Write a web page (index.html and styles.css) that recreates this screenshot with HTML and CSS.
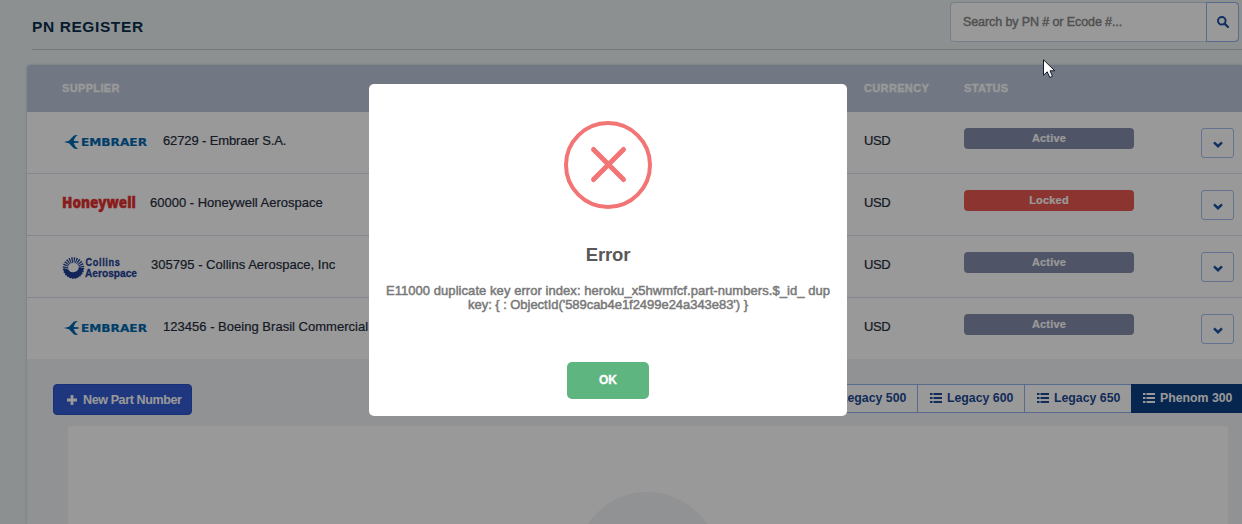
FILE: index.html
```html
<!DOCTYPE html>
<html lang="en">
<head>
<meta charset="utf-8">
<title>PN Register</title>
<link rel="stylesheet" href="styles.css">
</head>
<body>
<svg class="defs" width="0" height="0" aria-hidden="true">
  <symbol id="list" viewBox="0 0 12 10"><path d="M0 0h2.500v2H0zM3.500 0H12v2H3.500zM0 4h2.500v2H0zM3.500 4H12v2H3.500zM0 8h2.500v2H0zM3.500 8H12v2H3.500z" fill="currentColor"/></symbol>
  <symbol id="down" viewBox="0 0 10 7"><path d="M1 1.300 L5 5.200 L9 1.300" fill="none" stroke="currentColor" stroke-width="2.400"/></symbol>
</svg>

<div class="page">
  <header class="top">
    <h1 class="title">PN REGISTER</h1>
    <div class="search">
      <span class="field">Search by PN # or Ecode #...</span>
      <span class="go"><svg width="12" height="12" viewBox="0 0 12 12"><circle cx="4.800" cy="4.800" r="3.800" fill="none" stroke="#1c51a4" stroke-width="2"/><path d="M7.600 7.600l3.400 3.400" stroke="#1c51a4" stroke-width="2.200" stroke-linecap="round"/></svg></span>
    </div>
  </header>

  <main class="panel">
    <div class="row head"><span class="supplier">SUPPLIER</span><span class="currency">CURRENCY</span><span class="status">STATUS</span></div>
    <div class="row">
      <span class="supplier"><svg class="em" width="84" height="16"><path d="M0 8 L5 6.700 L10 1.400 Q11.500 .8 14 1 Q10.500 3 9.800 6.900 L14.500 7.200 V8.800 L9.800 9.100 Q10.500 13 14 15 Q11.500 15.200 10 14.600 L5 9.300 Z" fill="#0069b0"/><text class="logo-embraer" x="17" y="12" textLength="66" lengthAdjust="spacingAndGlyphs">EMBRAER</text></svg><span class="n1">62729 - Embraer S.A.</span></span>
      <span class="currency">USD</span><span class="status"><b class="badge">Active</b></span><span class="more"><svg width="10" height="7"><use href="#down"/></svg></span>
    </div>
    <div class="row">
      <span class="supplier"><svg class="hw" width="76" height="28"><text class="logo-honeywell" x="0" y="16.500" textLength="74" lengthAdjust="spacingAndGlyphs">Honeywell</text></svg><span class="n2">60000 - Honeywell Aerospace</span></span>
      <span class="currency">USD</span><span class="status"><b class="badge locked">Locked</b></span><span class="more"><svg width="10" height="7"><use href="#down"/></svg></span>
    </div>
    <div class="row">
      <span class="supplier"><svg class="co" width="77" height="28"><circle cx="11.500" cy="12" r="8" fill="none" stroke="#1f3f95" stroke-width="5.500" stroke-dasharray="1.150 .944"/><path d="M1.500 12 A10 10 0 0 0 21.500 12.500 L17 11 A6 6 0 0 1 6 13.500 Z" fill="#1f3f95"/><text class="logo-collins" transform="translate(23.500 9.700) scale(.8 1)" textLength="43" lengthAdjust="spacing">Collins</text><text class="logo-collins" transform="translate(23 20.500) scale(.8 1)" textLength="65" lengthAdjust="spacingAndGlyphs">Aerospace</text></svg><span class="n3">305795 - Collins Aerospace, Inc</span></span>
      <span class="currency">USD</span><span class="status"><b class="badge">Active</b></span><span class="more"><svg width="10" height="7"><use href="#down"/></svg></span>
    </div>
    <div class="row last">
      <span class="supplier"><svg class="em" width="84" height="16"><path d="M0 8 L5 6.700 L10 1.400 Q11.500 .8 14 1 Q10.500 3 9.800 6.900 L14.500 7.200 V8.800 L9.800 9.100 Q10.500 13 14 15 Q11.500 15.200 10 14.600 L5 9.300 Z" fill="#0069b0"/><text class="logo-embraer" x="17" y="12" textLength="66" lengthAdjust="spacingAndGlyphs">EMBRAER</text></svg><span class="n3">123456 - Boeing Brasil Commercial</span></span>
      <span class="currency">USD</span><span class="status"><b class="badge">Active</b></span><span class="more"><svg width="10" height="7"><use href="#down"/></svg></span>
    </div>

    <div class="tools">
      <span class="new"><svg width="10" height="10" viewBox="0 0 10 10"><path d="M5 0v10M0 5h10" stroke="#fff" stroke-width="2.800"/></svg>New Part Number</span>
      <div class="tabs">
        <span class="tab"><svg width="12" height="10"><use href="#list"/></svg>Legacy 500</span>
        <span class="tab"><svg width="12" height="10"><use href="#list"/></svg>Legacy 600</span>
        <span class="tab"><svg width="12" height="10"><use href="#list"/></svg>Legacy 650</span>
        <span class="tab on"><svg width="12" height="10"><use href="#list"/></svg>Phenom 300</span>
      </div>
    </div>
    <div class="card"><div class="disc"></div></div>
  </main>
</div>

<div class="overlay">
  <div class="modal">
    <svg class="cross" width="88" height="88"><circle cx="44" cy="44" r="42" fill="none" stroke="#f27474" stroke-width="4"/><path d="M29.500 28.500l30 30M59.500 28.500l-30 30" stroke="#f27474" stroke-width="5" stroke-linecap="round"/></svg>
    <h2 class="modal-title">Error</h2>
    <p class="message"><span class="m1">E11000 duplicate key error index: heroku_x5hwmfcf.part-numbers.$_id_ dup</span><br><span class="m2">key: { : ObjectId('589cab4e1f2499e24a343e83') }</span></p>
    <span class="ok">OK</span>
  </div>
</div>
<svg class="cursor" width="13" height="20" viewBox="0 0 13 20"><path d="M.5 .8V16.200L4.200 12.800L6.800 18.500L9.500 17.300L7 11.800H11.800Z" fill="#fff" stroke="#111827"/></svg>
</body>
</html>
```
FILE: styles.css
```css
* { box-sizing: border-box; }
body { margin: 0; width: 1242px; height: 524px; overflow: hidden; background: #e9f1f0; color: #252c3d; font: 13px "Liberation Sans", Arial, sans-serif; }
svg { display: block; flex: none; }
.defs { position: absolute; }
.page { width: 1242px; height: 524px; overflow: hidden; padding-left: 27px; }
.top { height: 50px; margin-left: 5px; border-bottom: 1px solid #c1c9d0; display: flex; justify-content: space-between; }
.title { margin: 17px 0 0; font-size: 15.5px; line-height: 20px; letter-spacing: .6px; font-weight: 700; color: #0a2e4e; }
.search { display: flex; width: 289px; height: 40px; margin: 2px 3px 0 0; background: #fff; border: 1px solid #c4d2e8; border-radius: 4px; }
.field { flex: 1; padding: 12px 0 0 12px; line-height: 15px; font-size: 12.5px; letter-spacing: -.1px; color: #858585; -webkit-text-stroke: .4px; }
.go { width: 33px; margin: -1px; border: 1px solid #91b3ed; border-radius: 0 4px 4px 0; display: flex; align-items: center; justify-content: center; }
.panel { margin-top: 15px; width: 1215px; height: 459px; background: #f1f3f6; border-radius: 4px 0 0 0; box-shadow: 0 0 3px #b9c5d1; overflow: hidden; }
.row { display: flex; height: 62px; background: #fff; border-bottom: 1px solid #dce0ec; padding-left: 35px; -webkit-text-stroke: .2px; }
.row.last { border-bottom: 0; height: 61px; }
.row.head { height: 47px; border: 0; background: #bec9da; color: #fff; font-size: 11px; font-weight: 700; line-height: 46px; -webkit-text-stroke: .3px; letter-spacing: .35px; }
.supplier { display: flex; width: 802px; white-space: nowrap; }
.currency { width: 100px; }
.status { width: 237px; }
.row:not(.head) .currency, .supplier > span { line-height: 17px; padding-top: 20px; }
.row:not(.head) .currency { letter-spacing: -.4px; }
.em { margin: 22px 15px 0 2px; }
.hw { margin: 17px 12px 0 0; }
.co { margin: 20px 12px 0 0; }
.n1 { letter-spacing: -.12px; }
.n2 { letter-spacing: 0; }
.n3 { letter-spacing: .02px; }
.badge { display: block; width: 170px; height: 21px; margin-top: 16px; border-radius: 4px; background: #848cac; color: #fff; font-size: 11px; line-height: 21px; text-align: center; letter-spacing: .2px; }
.locked { background: #e95850; }
.more { display: flex; align-items: center; justify-content: center; width: 33px; height: 30px; margin-top: 16px; border: 1px solid #a5c0ee; border-radius: 3px; color: #1c51a4; padding-top: 3px; }
.tools { display: flex; justify-content: space-between; padding: 25px 0 0 26px; height: 67px; }
.new { display: flex; align-items: center; gap: 6px; width: 139px; height: 31px; padding-left: 13px; border: 1px solid #2850c8; border-radius: 4px; background: #355dd4; color: #fff; font-size: 12.5px; font-weight: 700; letter-spacing: -.38px; white-space: nowrap; }
.tabs { display: flex; height: 30px; }
.tab { display: flex; align-items: center; width: 107px; gap: 5px; height: 29px; padding-left: 12px; border: 1px solid #91b3ed; border-right: 0; background: #fff; color: #1c4a94; font-weight: 700; font-size: 12.3px; padding-bottom: 1px; white-space: nowrap; }
.tab.on { width: 111px; padding-left: 11px; background: #0a3e84; color: #fff; border-color: #0a3e84; }
.card { width: 1160px; height: 120px; margin-left: 41px; background: #fff; border-radius: 4px; overflow: hidden; padding: 66px 0 0 508px; }
.disc { width: 143px; height: 143px; border-radius: 50%; background: #f1f3f6; }
.overlay { position: absolute; inset: 0; background: rgba(0,0,0,.4); }
.modal { position: absolute; left: 369px; top: 84px; width: 478px; height: 332px; border-radius: 5px; background: #fff; display: flex; flex-direction: column; align-items: center; }
.cross { margin-top: 37px; }
.modal-title { margin: 34px 0 0; font-size: 18.5px; letter-spacing: -.15px; line-height: 24px; color: #595959; }
.message { margin: 17px 0 0; font-size: 13px; line-height: 14px; color: #797979; text-align: center; white-space: nowrap; -webkit-text-stroke: .5px; }
.m1 { letter-spacing: .06px; }
.m2 { letter-spacing: -.04px; }
.ok { width: 82px; height: 37px; margin-top: 50px; border-radius: 5px; background: #5fb580; color: #fff; font-size: 12px; font-weight: 700; line-height: 36px; text-align: center; -webkit-text-stroke: .3px; }
.cursor { position: absolute; left: 1043px; top: 59px; }
.logo-embraer { font: 700 11px "DejaVu Sans", sans-serif; fill: #0069b0; stroke: #0069b0; stroke-width: .2px; }
.logo-honeywell { font: 900 15px "Noto Sans", "Open Sans", sans-serif; fill: #e4302d; stroke: #e4302d; stroke-width: .4px; }
.logo-collins { font: 700 11.5px "Liberation Sans", sans-serif; fill: #1f3f95; stroke: #1f3f95; stroke-width: .3px; }
```
